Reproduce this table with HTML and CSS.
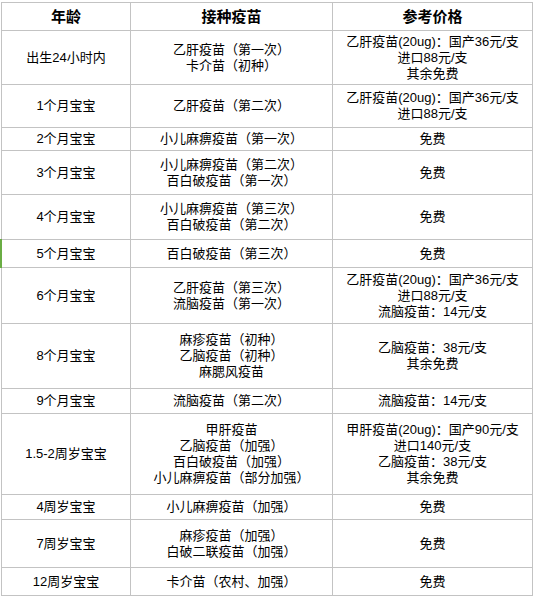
FILE: index.html
```
<!DOCTYPE html>
<html lang="zh-CN">
<head>
<meta charset="utf-8">
<title>疫苗接种时间表</title>
<link rel="stylesheet" href="styles.css">
</head>
<body>
<div class="sheet">
  <div class="cell head">年龄</div>
  <div class="cell head">接种疫苗</div>
  <div class="cell head">参考价格</div>

  <div class="cell">出生24小时内</div>
  <div class="cell">乙肝疫苗（第一次）<br>卡介苗（初种）</div>
  <div class="cell">乙肝疫苗(20ug)：国产36元/支<br>进口88元/支<br>其余免费</div>

  <div class="cell">1个月宝宝</div>
  <div class="cell">乙肝疫苗（第二次）</div>
  <div class="cell">乙肝疫苗(20ug)：国产36元/支<br>进口88元/支</div>

  <div class="cell">2个月宝宝</div>
  <div class="cell">小儿麻痹疫苗（第一次）</div>
  <div class="cell">免费</div>

  <div class="cell">3个月宝宝</div>
  <div class="cell">小儿麻痹疫苗（第二次）<br>百白破疫苗（第一次）</div>
  <div class="cell">免费</div>

  <div class="cell">4个月宝宝</div>
  <div class="cell">小儿麻痹疫苗（第三次）<br>百白破疫苗（第二次）</div>
  <div class="cell">免费</div>

  <div class="cell marked">5个月宝宝</div>
  <div class="cell">百白破疫苗（第三次）</div>
  <div class="cell">免费</div>

  <div class="cell">6个月宝宝</div>
  <div class="cell">乙肝疫苗（第三次）<br>流脑疫苗（第一次）</div>
  <div class="cell">乙肝疫苗(20ug)：国产36元/支<br>进口88元/支<br>流脑疫苗：14元/支</div>

  <div class="cell">8个月宝宝</div>
  <div class="cell">麻疹疫苗（初种）<br>乙脑疫苗（初种）<br>麻腮风疫苗</div>
  <div class="cell">乙脑疫苗：38元/支<br>其余免费</div>

  <div class="cell">9个月宝宝</div>
  <div class="cell">流脑疫苗（第二次）</div>
  <div class="cell">流脑疫苗：14元/支</div>

  <div class="cell">1.5-2周岁宝宝</div>
  <div class="cell">甲肝疫苗<br>乙脑疫苗（加强）<br>百白破疫苗（加强）<br>小儿麻痹疫苗（部分加强）</div>
  <div class="cell">甲肝疫苗(20ug)：国产90元/支<br>进口140元/支<br>乙脑疫苗：38元/支<br>其余免费</div>

  <div class="cell">4周岁宝宝</div>
  <div class="cell">小儿麻痹疫苗（加强）</div>
  <div class="cell">免费</div>

  <div class="cell">7周岁宝宝</div>
  <div class="cell">麻疹疫苗（加强）<br>白破二联疫苗（加强）</div>
  <div class="cell">免费</div>

  <div class="cell">12周岁宝宝</div>
  <div class="cell">卡介苗（农村、加强）</div>
  <div class="cell">免费</div>
</div>
</body>
</html>
```
FILE: styles.css
```
html, body {
  margin: 0;
  padding: 0;
  background: #ffffff;
}

body {
  font-family: "Liberation Sans", "Noto Sans CJK SC", sans-serif;
  font-size: 13px;
  line-height: 16px;
  color: #000000;
}

.sheet {
  display: grid;
  grid-template-columns: 128px 201px 199px;
  grid-template-rows: 27px 53px 42px 22px 43px 44px 27px 55px 64px 24px 80px 24px 47px 27px;
  gap: 1px;
  padding: 1px;
  margin: 2px 0 0 1px;
  width: max-content;
  background: #c3c3c3;
}

.cell {
  display: flex;
  align-items: center;
  justify-content: center;
  text-align: center;
  background: #ffffff;
  white-space: nowrap;
}

.head {
  font-size: 15px;
  font-weight: 700;
}

.marked {
  position: relative;
}

.marked::before {
  content: "";
  position: absolute;
  left: -2px;
  top: -1px;
  width: 2px;
  height: 29px;
  background: #6aad44;
}
```
